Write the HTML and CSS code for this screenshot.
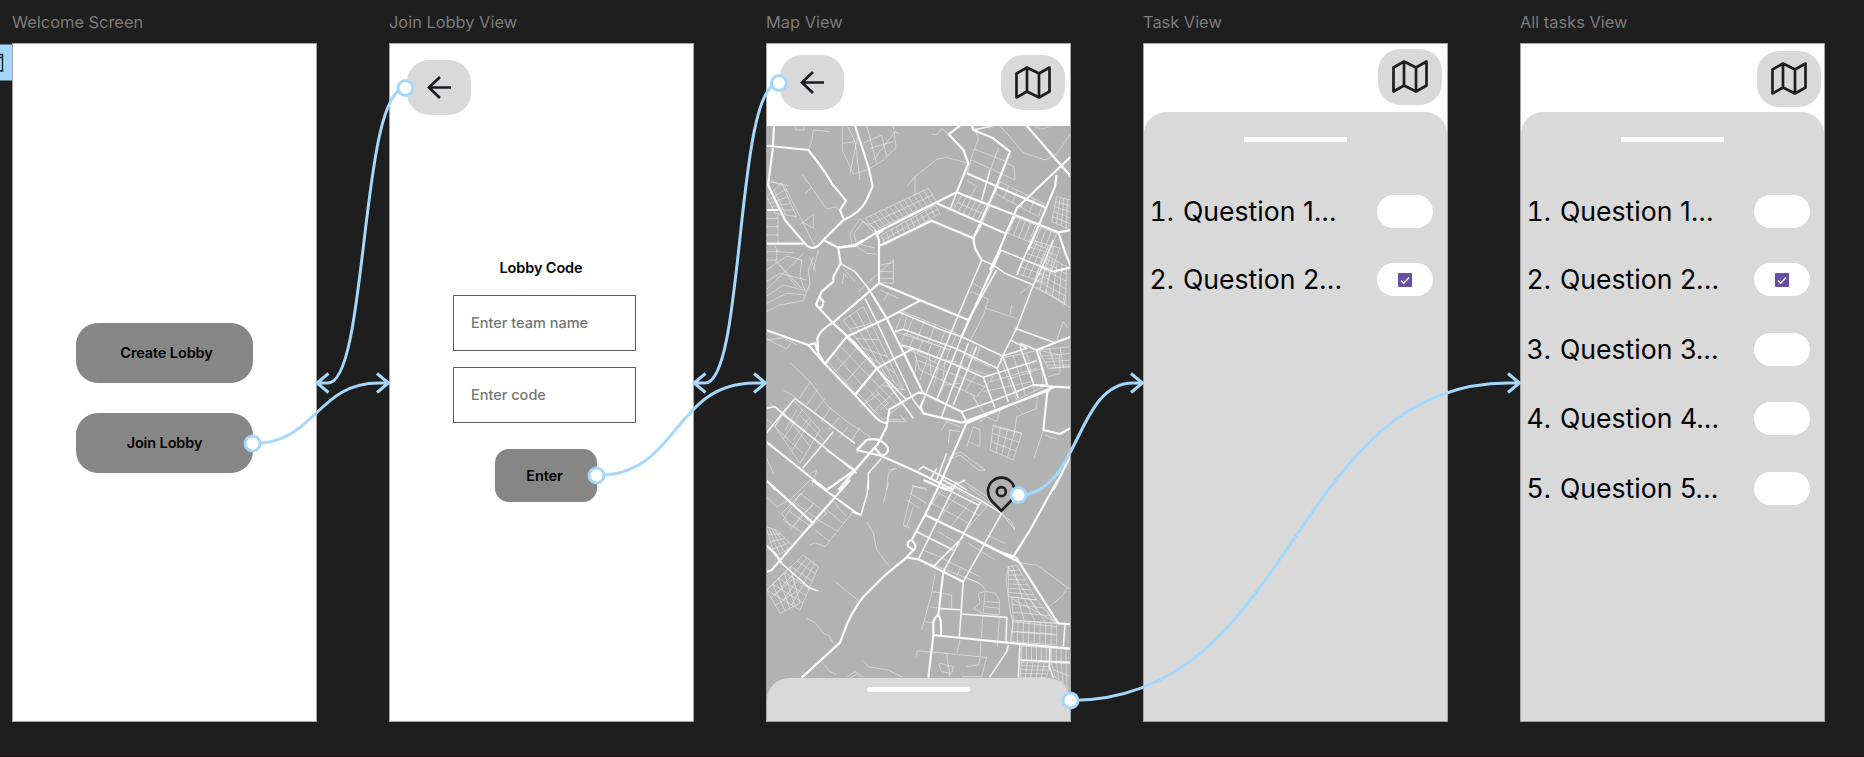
FILE: index.html
```html
<!DOCTYPE html>
<html lang="en">
<head>
<meta charset="utf-8">
<title>Lobby flow</title>
<link rel="stylesheet" href="styles.css">
</head>
<body>
<svg class="defs" width="0" height="0" aria-hidden="true">
  <symbol id="i-back" viewBox="0 0 24 23"><path d="M24 11.5H2M13 1L2 11.5L13 22" fill="none" stroke="#1d1b20" stroke-width="2.7"/></symbol>
  <symbol id="i-map" viewBox="0 0 36 33"><path d="M1.5 7.5V31.5L12 25.5L24 31.5L34.500 25.500V1.500L24 7.500L12 1.500ZM12 1.500V25.500M24 7.500V31.500" fill="none" stroke="#1e1e1e" stroke-width="2.700" stroke-linejoin="round"/></symbol>
</svg>

<main class="board">
  <section class="col">
    <h2 class="label">Welcome Screen</h2>
    <div class="frame welcome">
      <button class="btn create">Create Lobby</button>
      <button class="btn">Join Lobby</button>
    </div>
  </section>

  <section class="col">
    <h2 class="label">Join Lobby View</h2>
    <div class="frame join">
      <span class="chip"><svg width="24" height="23"><use href="#i-back"/></svg></span>
      <div class="form">
        <h3 class="title">Lobby Code</h3>
        <div class="field">Enter team name</div>
        <div class="field">Enter code</div>
        <button class="btn enter">Enter</button>
      </div>
    </div>
  </section>

  <section class="col">
    <h2 class="label">Map View</h2>
    <div class="frame mapview">
      <div class="bar">
        <span class="chip"><svg width="24" height="23"><use href="#i-back"/></svg></span>
        <span class="chip"><svg width="36" height="33"><use href="#i-map"/></svg></span>
      </div>
      <svg class="map" viewBox="18 378 915 1788" preserveAspectRatio="none">
        <g id="hatch" class="minor"></g>
        <g class="minor">
          <path d="M107 377V390H132V377M210 395L160 390L155 425L145 450M247 377V450L280 522L325 508L370 480L408 443L400 377M250 430L285 425L262 377M295 400L270 520M285 425L300 540M320 377L350 490M310 430L365 405L380 470M330 445L400 425M340 480L405 395L418 402M515 402L530 405L545 385L566 403M440 560L465 530L530 478L560 472L625 490M465 530V585M640 377L655 415L635 470L622 520M645 448L740 485M635 480L765 540L762 500L735 488M715 445L690 512M720 377L790 458L855 480L890 462L933 400M820 377L845 388L872 377M126 522L200 627L228 620L245 636M136 580L156 562M18 560L35 545L85 557M35 545L75 560L165 740M122 673L160 642V685L130 668M345 700L300 655L270 700L275 735M345 685L310 665L282 700L290 735M620 540L650 560L630 590M18 680H55M18 705H55M54 640V730M18 655H55"/>
          <path transform="translate(0 720)" d="M18 35H55M18 60H50V30M18 92L80 48L125 60L120 110L135 152M18 150L85 85L130 40M18 125L60 100L140 120M18 170L70 135L138 152M18 190L80 160L138 165M18 215L60 195L130 182L150 130L145 90L160 50M150 55L168 97M40 10L54 35L100 38M45 60L110 140M60 75L125 145M175 30L160 90M280 12L320 40L350 42M300 12L345 25M250 85L285 125M247 132L252 100L265 115M295 155L350 105L400 60V130L360 128M362 95H400M362 75L400 68M362 115H402M360 150L415 175M385 155L372 182M640 130L665 145M635 155L685 178L670 225L632 300M678 205L770 235M755 195L750 225M18 300L70 293L110 315M18 295L80 327L92 310M90 368L150 425L205 500L262 545L330 590M70 450L105 470M150 425L118 475M175 445L140 495M195 475L160 520M210 505L185 545M240 530L205 570M265 560L235 595M30 490L65 520L45 560L18 535M45 560L128 640M80 500L40 555M110 510L75 570M145 535L100 600M120 525L200 610M300 560L270 610M330 590L290 640M385 540L435 538M375 545L440 545L420 525M315 480L345 520M350 455L385 490L360 510M300 500L360 460M365 435L435 450M440 230L430 270M470 350L465 400M500 360L480 420M535 380L520 440M560 400L545 455M555 360L590 365M550 435L600 430M625 350L690 380M640 320L625 355M660 320L645 365M630 460L680 530L710 545L720 510M640 465L655 500M680 530L655 550M770 530L790 522L830 505L832 470M770 530L762 585M760 490L790 522M822 655L850 570M855 585L890 598M545 570L560 545L600 560M565 610L570 570L600 575M620 620L640 560L660 570V620L625 605M700 560L785 580M565 655L600 635L675 690L655 690L600 645L562 660M780 160L850 110M830 140L915 195L910 170M855 150L933 205M890 300L910 245L925 265M835 330L900 345V400L865 410M860 375H933M862 355H900M870 385L933 380M690 425L830 385M670 455L815 425M385 690L410 685M405 685L385 700L380 750M460 740L500 745M150 700L170 690L155 740M18 650L40 700"/>
          <path transform="translate(0 1440)" d="M385 10L370 70M320 125L340 160L350 210L390 262M225 305L295 362M140 415L165 428L190 460L207 467L220 490M185 545L210 575L228 583M310 542L325 560L385 570L430 593M262 590L285 575L310 592M270 593L290 583L300 593M18 50L50 80L90 60L150 0M65 100L135 30M65 100L95 145L120 110L160 75M150 195L165 188L195 200L275 100M165 150L210 185M175 120L235 155M200 90L250 130M220 65L260 110M605 0L690 55L765 150L755 125L720 100M625 20L730 100M460 15L430 135L450 145M450 40L500 70M440 60L480 85M460 80L440 140M455 15L500 30M535 155L600 195M520 180L575 210M625 190L705 240M680 165L735 190M470 235L520 255L560 270L660 310M490 210L560 240M555 240L660 290M600 265L590 290M525 280L515 340L485 450M520 335L575 345V385M510 380L540 385M495 425L520 428M615 290L665 315L680 335L705 340L718 360V405L670 400L640 385L660 370L655 340L675 335L670 395M675 365L718 368M675 380L718 385M668 410L660 530M718 410L712 500M600 480L590 520M470 530L472 512L680 532L665 590L605 590M560 520L570 590M540 550L580 560L575 580L545 575L535 550M620 560L655 555L660 535M785 250L830 255L922 322L905 350L865 382M922 322L933 328M745 260L738 300L752 400L760 430M745 260L830 390M755 355L885 425M880 425L860 390M755 425L890 440M752 455L890 465M760 430L750 490"/>
        </g>
        <g class="mid">
          <path d="M645 720L640 715L665 672M735 700L765 650M590 577L572 625M690 510L665 600M700 377L640 390"/>
          <path transform="translate(0 720)" d="M665 60L595 225L490 480M710 90L625 240L530 480M625 310L545 530M650 320L580 495M315 175L350 245L460 480L490 520M260 290L350 385L460 535M350 385L440 480M415 215L545 270L605 290L728 348L712 385M405 275L430 268L585 325L712 385M425 315L460 325L575 370L670 412M670 412L705 505M712 385L745 485M728 348L775 475M780 320L822 435M670 412L830 362M605 515L680 490L820 435L860 435M750 300L800 325L728 348M765 265L885 308M780 310L830 330M722 30L880 95M820 135L770 265L728 348M770 105L815 0M820 135L845 85L880 0M665 60L700 75L735 100L820 135M240 70L285 95L325 145M18 580L105 475L285 610M65 520L180 610M220 575L128 685M285 690L200 630M18 505L45 500L80 530L290 700M18 720L45 750M475 690L490 680L580 725L620 750M560 640L530 720M530 685L510 720M365 655L325 700V750"/>
          <path transform="translate(0 1440)" d="M325 0L322 40L303 105L275 95M590 5L475 238M555 30L615 0M545 20L655 75M665 60L550 275M610 170L520 260M470 155L580 210M725 100L610 305M610 305L598 470M535 385L607 390M605 402L740 412L738 490M550 0L660 60L725 100M780 540L933 548M780 490L775 593M870 500L868 560L880 593M745 495L740 515L688 593M65 250L150 325L175 333M915 435L910 500"/>
        </g>
        <g class="major">
          <path d="M42 377L38 450L24 555L75 660L130 725Q158 765 190 720L250 660Q300 640 320 600L338 558L325 500L285 377M18 437L145 450Q200 520 215 550L258 602L240 630L250 655M190 720L235 743L285 738L345 700L590 577L625 490L610 450L566 403L600 377M345 690L357 720V850M358 738L515 662L640 715M590 577L765 645L895 697L933 690M620 520L855 622M530 610L735 700M635 377L640 390L700 415L750 455L705 570L640 715M800 377L933 530M933 470L890 510L770 625L718 750L690 810M890 525L885 560L805 750M895 697L920 770L933 800M18 630H55M18 731H130M640 715L645 745L665 780M370 690L350 705"/>
          <path transform="translate(0 720)" d="M235 25L242 70L220 110V125L185 155L168 195L220 250L285 310L350 385M168 190Q185 220 190 185L180 172M18 270L145 315L195 372L285 465L345 530Q360 548 382 550M145 315L165 310L175 340L195 372M175 340L172 295Q180 270 220 247L357 130L625 240M195 372L260 290L380 235L480 182M235 22L285 15L310 0M325 145L380 235L490 460M285 465L350 385L460 325M490 460L475 458L388 508L380 560L355 610L285 690L200 750M355 610L235 750M490 460L605 515L620 548L545 720L530 750M490 480L482 500L490 520L605 548L655 535M620 550L860 450L885 440L933 443M605 548L870 450M820 435L880 440M862 455L850 570L900 582L933 563M885 308L830 330L862 435M885 308L933 290M722 30L605 290M880 95L933 82M18 605L200 750M290 630L320 600Q360 590 382 620Q390 640 365 648L290 630M345 625L365 648L480 700L580 750M933 645L880 750"/>
          <path transform="translate(0 1440)" d="M18 0L160 130M155 0L290 100L303 105M270 0L35 270L18 277M18 195L45 220L65 250M545 0L495 105L455 180M490 0L560 30M495 105L610 160L720 215L768 232M455 180Q438 185 445 200L460 210L440 232L370 290L310 350Q280 390 262 430L240 488L125 593M455 180Q475 200 460 212M440 232L475 238L550 275L612 307M550 275L535 405Q520 415 520 430V465L505 593M535 405Q545 415 543 465M518 465L740 488L933 506M768 232L885 415L895 430L933 433M893 0L810 150L760 230L735 222M620 165L775 245"/>
        </g>
        <g fill="none" stroke="#1e1e1e" stroke-width="8" transform="translate(0 1440)"><path d="M724 93C705 70 684 60 684 33A40 40 0 0 1 764 33C764 60 743 70 724 93Z" stroke-linejoin="round"/><circle cx="724" cy="35" r="13.500"/></g>
      </svg>
      <div class="sheet peek"><i class="handle"></i></div>
    </div>
  </section>

  <section class="col">
    <h2 class="label">Task View</h2>
    <div class="frame tasks">
      <span class="chip"><svg width="36" height="33"><use href="#i-map"/></svg></span>
      <div class="sheet">
        <i class="handle"></i>
        <ol class="list">
          <li><span class="num">1.</span><span class="q">Question 1...</span><b class="pill"></b></li>
          <li><span class="num">2.</span><span class="q">Question 2...</span><b class="pill"><svg width="14" height="14" viewBox="0 0 14 14"><rect width="14" height="14" rx="1" fill="#6750a4"/><path d="M3 7.500L5.700 10.200L11 4.500" fill="none" stroke="#fff" stroke-width="1.300"/></svg></b></li>
        </ol>
      </div>
    </div>
  </section>

  <section class="col">
    <h2 class="label">All tasks View</h2>
    <div class="frame tasks all">
      <span class="chip"><svg width="36" height="33"><use href="#i-map"/></svg></span>
      <div class="sheet">
        <i class="handle"></i>
        <ol class="list">
          <li><span class="num">1.</span><span class="q">Question 1...</span><b class="pill"></b></li>
          <li><span class="num">2.</span><span class="q">Question 2...</span><b class="pill"><svg width="14" height="14" viewBox="0 0 14 14"><rect width="14" height="14" rx="1" fill="#6750a4"/><path d="M3 7.500L5.700 10.200L11 4.500" fill="none" stroke="#fff" stroke-width="1.300"/></svg></b></li>
          <li><span class="num">3.</span><span class="q">Question 3...</span><b class="pill"></b></li>
          <li><span class="num">4.</span><span class="q">Question 4...</span><b class="pill"></b></li>
          <li><span class="num">5.</span><span class="q">Question 5...</span><b class="pill"></b></li>
        </ol>
      </div>
    </div>
  </section>
</main>

<svg class="links" width="1864" height="757" viewBox="0 0 1864 757">
  <rect x="-1" y="44.500" width="13" height="36" fill="#a5d7fb"/>
  <path d="M0 54.500H2.500V71H0M0 57.500H2.500" fill="none" stroke="#1e1e1e" stroke-width="1.400"/>
  <g fill="none" stroke="#a5d7fb" stroke-width="3">
    <path d="M253 443.500C316 443.500 316 383 379 383H388M377 373.500L388.500 383L377 392.500"/>
    <path d="M405.500 88C360 88 368 383 328 383H318M328.500 373.500L317 383L328.500 392.500"/>
    <path d="M596.500 475.500C680 475.500 672 383 755 383H765M754 373.500L765.500 383L754 392.500"/>
    <path d="M779 83C735 83 745 383 705 383H695M705.500 373.500L694 383L705.500 392.500"/>
    <path d="M1018.500 495C1080 495 1075 383 1133 383H1142M1131 373.500L1142.500 383L1131 392.500"/>
    <path d="M1070 700.500C1296 700.500 1290 383 1508 383H1519M1508 373.500L1519.500 383L1508 392.500"/>
    <g fill="#fff">
      <circle cx="252.500" cy="443.500" r="7.500"/><circle cx="405.500" cy="88" r="7.500"/><circle cx="596.500" cy="475.500" r="7.500"/>
      <circle cx="779" cy="83" r="7.500"/><circle cx="1018.500" cy="495" r="7.500"/><circle cx="1070.500" cy="700.500" r="7.500"/>
    </g>
  </g>
</svg>
<script src="map.js"></script>
</body>
</html>
```
FILE: styles.css
```css
* { box-sizing: border-box; }
body { margin: 0; height: 757px; overflow: hidden; background: #1e1e1e; font-family: Inter, "Liberation Sans", sans-serif; color: #000; border-bottom: 1px solid #151214; }
.defs { position: absolute; }
.board { display: flex; gap: 72px; padding-left: 12px; }
.col { width: 305px; flex: none; }
.label { margin: 0; height: 43px; padding-top: 11px; font-size: 16.4px; line-height: 22px; font-weight: 400; color: #7c7c7c; white-space: nowrap; }
.frame { height: 679px; background: #fff; border: 1px solid #a5a5a5; display: flex; flex-direction: column; overflow: hidden; }
.btn { border: 0; padding: 0; width: 177px; height: 60px; border-radius: 22px; background: #868686; font: 600 14.5px/20px Inter, "Liberation Sans", sans-serif; letter-spacing: -0.12px; color: #000; }
.chip { width: 64px; height: 55.5px; border-radius: 22px; background: #d9d9d9; display: flex; align-items: center; justify-content: center; flex: none; }
.chip svg { display: block; }

.welcome { padding: 279px 0 0 63px; gap: 30px; }
.create { padding-left: 4px; }

.join { padding: 15.5px 0 0 16.5px; }
.form { display: flex; flex-direction: column; width: 183px; margin: 143px 0 0 46.5px; }
.title { margin: 0 0 17px; padding-right: 7px; text-align: center; font-size: 14.5px; line-height: 20px; font-weight: 600; letter-spacing: -0.12px; }
.field { height: 56px; margin-bottom: 16px; padding-left: 17px; border: 1px solid #5c5c5c; font-size: 14.5px; line-height: 54px; font-weight: 500; color: #757575; }
.btn.enter { width: 102px; height: 53px; margin: 10px 0 0 42px; padding-right: 3px; border-radius: 14px; }

.mapview { position: relative; }
.bar { height: 82px; flex: none; padding: 10.5px 5px 0 12.5px; display: flex; justify-content: space-between; }
.map { display: block; width: 305px; height: 596px; margin-left: -1px; background: #b2b2b2; flex: none; }
.map path { stroke-linejoin: round; }
.minor { fill: none; stroke: #fff; stroke-opacity: .45; stroke-width: 3; }
.mid { fill: none; stroke: #fff; stroke-opacity: .85; stroke-width: 4.8; }
.major { fill: none; stroke: #fff; stroke-opacity: .95; stroke-width: 6.5; }
.sheet { background: #d9d9d9; border-radius: 22px 22px 0 0; display: flex; flex-direction: column; align-items: center; flex: 1; }
.handle { width: 103px; height: 5px; background: #fff; flex: none; }
.peek { position: absolute; left: 0; right: 0; bottom: 0; height: 43px; padding-top: 9px; }
.peek .handle { border-radius: 3px; }

.tasks .chip { margin: 5px 5.5px 7.5px auto; }
.tasks.all .chip { margin: 7px 3px 5.5px auto; }
.tasks .sheet { padding-top: 25px; }
.list { list-style: none; width: 100%; margin: 53px 0 0; padding: 0 14px 0 7px; display: grid; grid-template-rows: 68px 70px 69px 70px 33px; }
.list li { display: flex; align-items: center; height: 33px; font-size: 26.6px; white-space: nowrap; }
.num { width: 23px; margin-right: 9px; display: flex; justify-content: flex-end; font-variant-numeric: tabular-nums; }
.num, .q { padding-bottom: 2px; }
.pill { width: 56px; height: 33px; margin-left: auto; border-radius: 17px; background: #fff; display: flex; align-items: center; justify-content: center; }
.links { position: absolute; left: 0; top: 0; }
```
FILE: map.js
```js
// Fills small street blocks: each entry is four corners, then columns and rows.
const blocks = [
  [315,655, 505,565, 530,605, 345,690, 13, 2],
  [365,705, 525,615, 540,640, 375,735, 11, 2],
  [605,585, 690,620, 665,670, 580,630, 6, 2],
  [765,650, 890,700, 870,750, 745,700, 8, 1],
  [890,590, 933,600, 933,690, 875,665, 4, 5],
  [20,590, 65,550, 110,650, 45,640, 2, 5],
  [720,545, 850,610, 835,650, 705,580, 5, 1],
  [815,720, 900,745, 860,850, 770,820, 5, 5],
  [850,760, 920,800, 915,910, 820,860, 5, 5],
  [250,960, 310,920, 430,1170, 350,1100, 3, 5],
  [200,1080, 260,1015, 350,1105, 285,1180, 3, 3],
  [290,1175, 350,1110, 440,1200, 370,1260, 3, 3],
  [430,935, 590,1000, 570,1050, 405,995, 5, 1],
  [435,1000, 570,1050, 550,1100, 420,1035, 5, 1],
  [460,1050, 700,1130, 650,1190, 480,1110, 5, 2],
  [720,1075, 840,1050, 850,1160, 770,1200, 3, 2],
  [700,1275, 785,1300, 760,1380, 690,1350, 4, 3],
  [835,1050, 933,1040, 933,1100, 865,1105, 3, 3],
  [70,1560, 120,1480, 200,1540, 130,1600, 3, 2],
  [18,1580, 50,1590, 100,1640, 45,1670, 4, 4],
  [20,1770, 130,1665, 175,1700, 120,1830, 6, 4],
  [20,1770, 90,1700, 120,1810, 60,1840, 4, 3],
  [495,1540, 560,1450, 680,1520, 610,1600, 3, 3],
  [745,1700, 770,1695, 830,1800, 745,1790, 2, 7],
  [755,1790, 830,1800, 890,1870, 760,1860, 4, 3],
  [758,1862, 890,1870, 890,1935, 755,1925, 8, 2],
  [785,1938, 933,1948, 933,1985, 785,1980, 10, 1],
  [785,1985, 870,1988, 860,2033, 780,2033, 5, 4],
  [875,1988, 933,1990, 933,2070, 885,2030, 4, 2],
  [45,1280, 100,1200, 180,1290, 120,1390, 2, 3]
];
const at = (p, q, t) => (p + (q - p) * t).toFixed(1);
let d = "";
for (const [ax, ay, bx, by, cx, cy, dx, dy, n, m] of blocks) {
  for (let i = 0; i <= n; i++) d += `M${at(ax, bx, i / n)} ${at(ay, by, i / n)}L${at(dx, cx, i / n)} ${at(dy, cy, i / n)}`;
  for (let j = 0; j <= m; j++) d += `M${at(ax, dx, j / m)} ${at(ay, dy, j / m)}L${at(bx, cx, j / m)} ${at(by, cy, j / m)}`;
}
const path = document.createElementNS("http://www.w3.org/2000/svg", "path");
path.setAttribute("d", d);
document.getElementById("hatch").append(path);
```
